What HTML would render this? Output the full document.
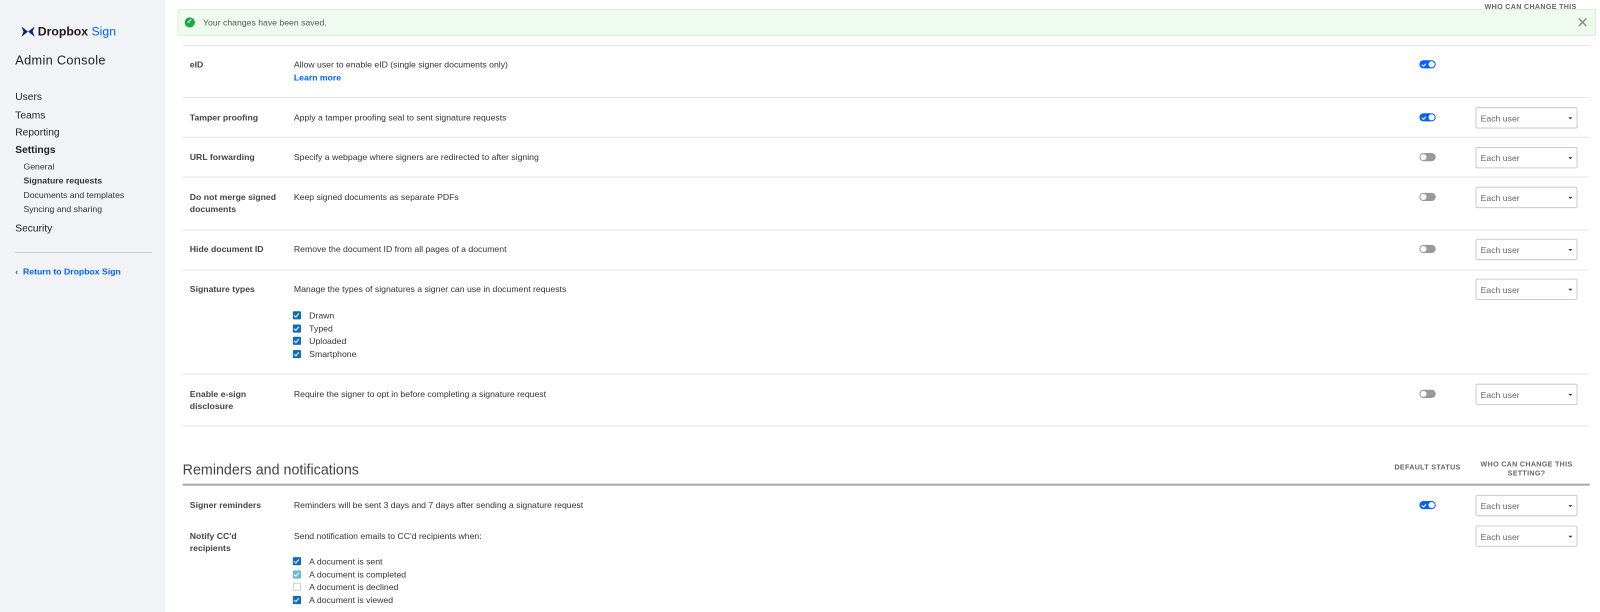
<!DOCTYPE html>
<html><head><meta charset="utf-8"><style>
*{box-sizing:border-box;margin:0;padding:0}
body{width:1600px;height:608px;overflow:hidden;background:#fff;font-family:"Liberation Sans",Arial,sans-serif;color:#333;position:relative;font-size:9px}
#w{position:absolute;left:0;top:0;width:1568px;height:596px;transform:scale(1.0204);transform-origin:0 0}
.side{position:absolute;left:0;top:0;width:162px;height:600px;background:#f1f3f6}
.a{position:absolute;white-space:nowrap}
.nav{font-size:10px;color:#222}
.sub{font-size:8.5px;color:#333}
.line{position:absolute;left:179px;width:1379px;height:1px;background:#e6e6e6}
.lbl{position:absolute;left:186px;font-weight:bold;color:#444;font-size:8.5px;line-height:12px}
.dsc{position:absolute;left:288px;color:#333;font-size:8.5px;white-space:nowrap}
.tg{position:absolute;left:1391px;width:16px;height:8px;border-radius:4px;background:#0061fe}
.tg:after{content:"";position:absolute;right:1px;top:1px;width:6px;height:6px;border-radius:50%;background:#fff}
.tg:before{content:"";position:absolute;left:3px;top:2px;width:1.5px;height:3px;border:solid #fff;border-width:0 1px 1px 0;transform:rotate(40deg)}
.tg.off{background:#999}
.tg.off:before{display:none}
.tg.off:after{left:1px;right:auto}
.sel{position:absolute;left:1446px;width:100px;height:21px;border:1px solid #ccc;border-radius:2px;font-size:8.5px;color:#666;padding:5px 0 0 4px}
.sel:after{content:"";position:absolute;right:4px;top:9px;border:2px solid transparent;border-top:2px solid #333}
.cb{position:absolute;left:287px;width:8px;height:8px;background:#0f6cbd;border-radius:1px}
.cb:after{content:"";position:absolute;left:2px;top:1px;width:2px;height:4px;border:solid #fff;border-width:0 1px 1px 0;transform:rotate(40deg)}
.cb.l{background:#6ab7d6}.cb.e{background:#fff;border:1px solid #ccc}.cb.e:after{display:none}
.ct{position:absolute;left:303px;font-size:8.5px;color:#333}
.hd{position:absolute;font-size:7px;font-weight:bold;color:#666;letter-spacing:.3px;text-align:center}
</style></head><body><div id="w">
<div class="side"></div>
<div class="a" style="left:21px;top:25px"><svg width="13" height="12" viewBox="0 0 13 12"><path d="M0 1L6.5 6 0 11 2 6z M13 1L6.5 6 13 11 11 6z" fill="#0d2481"/></svg></div>
<div class="a" style="left:37px;top:24px;font-size:12px;font-weight:bold;color:#1e1919">Dropbox <span style="color:#0061fe;font-weight:normal">Sign</span></div>
<div class="a" style="left:15px;top:52px;font-size:12.5px;color:#222;letter-spacing:.3px">Admin Console</div>
<div class="a nav" style="left:15px;top:90px">Users</div>
<div class="a nav" style="left:15px;top:108px">Teams</div>
<div class="a nav" style="left:15px;top:125px">Reporting</div>
<div class="a nav" style="left:15px;top:142px;font-weight:bold">Settings</div>
<div class="a sub" style="left:23px;top:158px">General</div>
<div class="a sub" style="left:23px;top:172px;font-weight:bold">Signature requests</div>
<div class="a sub" style="left:23px;top:186px">Documents and templates</div>
<div class="a sub" style="left:23px;top:200px">Syncing and sharing</div>
<div class="a nav" style="left:15px;top:219px">Security</div>
<div class="a" style="left:15px;top:247px;width:134px;height:1px;background:#ccc"></div>
<div class="a" style="left:15px;top:261px;font-size:8.5px;font-weight:bold;color:#0061fe">&#8249;&nbsp; Return to Dropbox Sign</div>

<div class="hd" style="left:1440px;top:4px;width:120px">WHO CAN CHANGE THIS</div>
<div class="a" style="left:174px;top:9px;width:1390px;height:26px;background:#eefbee;border:1px solid #d7f0d7"></div>
<div class="a" style="left:181px;top:17px;width:10px;height:10px;border-radius:50%;background:#1aa84a"></div>
<div class="a" style="left:183px;top:17px;color:#fff;font-size:7px;font-weight:bold">✓</div>
<div class="a" style="left:199px;top:17px;font-size:8.5px;color:#555">Your changes have been saved.</div>
<div class="a" style="left:1545px;top:14px;font-size:14px;color:#888">✕</div>

<div class="line" style="top:44px"></div>
<div class="lbl" style="top:57px">eID</div>
<div class="dsc" style="top:58px">Allow user to enable eID (single signer documents only)</div>
<div class="dsc" style="top:71px;color:#0061fe;font-weight:bold">Learn more</div>
<div class="tg" style="top:59px"></div>
<div class="line" style="top:95px"></div>
<div class="lbl" style="top:109px">Tamper proofing</div>
<div class="dsc" style="top:110px">Apply a tamper proofing seal to sent signature requests</div>
<div class="tg" style="top:111px"></div><div class="sel" style="top:105px">Each user</div>
<div class="line" style="top:134px"></div>
<div class="lbl" style="top:148px">URL forwarding</div>
<div class="dsc" style="top:149px">Specify a webpage where signers are redirected to after signing</div>
<div class="tg off" style="top:150px"></div><div class="sel" style="top:144px">Each user</div>
<div class="line" style="top:173px"></div>
<div class="lbl" style="top:187px">Do not merge signed<br>documents</div>
<div class="dsc" style="top:188px">Keep signed documents as separate PDFs</div>
<div class="tg off" style="top:189px"></div><div class="sel" style="top:183px">Each user</div>
<div class="line" style="top:225px"></div>
<div class="lbl" style="top:238px">Hide document ID</div>
<div class="dsc" style="top:239px">Remove the document ID from all pages of a document</div>
<div class="tg off" style="top:240px"></div><div class="sel" style="top:234px">Each user</div>
<div class="line" style="top:264px"></div>
<div class="lbl" style="top:277px">Signature types</div>
<div class="dsc" style="top:278px">Manage the types of signatures a signer can use in document requests</div>
<div class="sel" style="top:273px">Each user</div>
<div class="cb" style="top:305px"></div><div class="ct" style="top:304px">Drawn</div>
<div class="cb" style="top:318px"></div><div class="ct" style="top:317px">Typed</div>
<div class="cb" style="top:330px"></div><div class="ct" style="top:329px">Uploaded</div>
<div class="cb" style="top:343px"></div><div class="ct" style="top:342px">Smartphone</div>
<div class="line" style="top:366px"></div>
<div class="lbl" style="top:380px">Enable e-sign<br>disclosure</div>
<div class="dsc" style="top:381px">Require the signer to opt in before completing a signature request</div>
<div class="tg off" style="top:382px"></div><div class="sel" style="top:376px">Each user</div>
<div class="line" style="top:417px"></div>

<div class="a" style="left:179px;top:452px;font-size:14px;color:#444">Reminders and notifications</div>
<div class="hd" style="left:1360px;top:455px;width:78px">DEFAULT STATUS</div>
<div class="hd" style="left:1446px;top:451px;width:100px;line-height:9px">WHO CAN CHANGE THIS SETTING?</div>
<div class="a" style="left:179px;top:474px;width:1379px;height:2px;background:#aaa"></div>
<div class="lbl" style="top:489px">Signer reminders</div>
<div class="dsc" style="top:490px">Reminders will be sent 3 days and 7 days after sending a signature request</div>
<div class="tg" style="top:491px"></div><div class="sel" style="top:485px">Each user</div>
<div class="lbl" style="top:519px">Notify CC'd<br>recipients</div>
<div class="dsc" style="top:520px">Send notification emails to CC'd recipients when:</div>
<div class="sel" style="top:515px">Each user</div>
<div class="cb" style="top:546px"></div><div class="ct" style="top:545px">A document is sent</div>
<div class="cb l" style="top:559px"></div><div class="ct" style="top:558px">A document is completed</div>
<div class="cb e" style="top:571px"></div><div class="ct" style="top:570px">A document is declined</div>
<div class="cb" style="top:584px"></div><div class="ct" style="top:583px">A document is viewed</div>
</div></body></html>
